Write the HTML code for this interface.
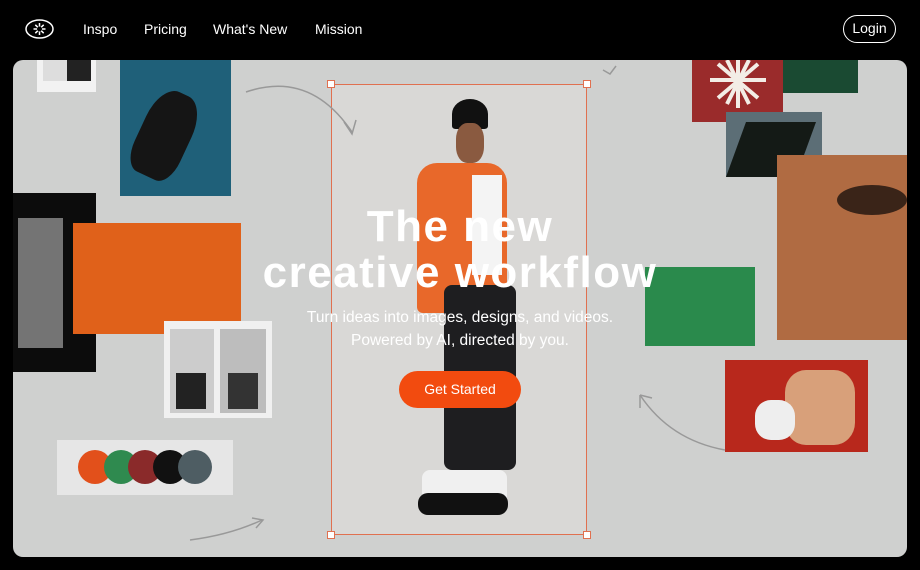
<!DOCTYPE html>
<html><head><style>
*{margin:0;padding:0;box-sizing:border-box}
body{width:920px;height:570px;background:#000;position:relative;overflow:hidden;font-family:"Liberation Sans",sans-serif}
.nav a{position:absolute;top:21px;color:#fff;font-size:14px;text-decoration:none}
.panel{position:absolute;left:13px;top:60px;width:894px;height:497px;background:#cfd0cf;border-radius:10px;overflow:hidden}
.b{position:absolute}
.c{position:absolute;border-radius:50%;width:34px;height:34px;top:450px}
</style></head><body>
<svg style="position:absolute;left:25px;top:19px" width="29" height="20" viewBox="0 0 29 20"><ellipse cx="14.5" cy="10" rx="13.5" ry="9" fill="none" stroke="#fff" stroke-width="1.5"/><g stroke="#fff" stroke-width="1.5"><line x1="14.5" y1="4" x2="14.5" y2="16"/><line x1="8.5" y1="10" x2="20.5" y2="10"/><line x1="10.3" y1="5.8" x2="18.7" y2="14.2"/><line x1="18.7" y1="5.8" x2="10.3" y2="14.2"/></g><circle cx="14.5" cy="10" r="2.5" fill="#000"/></svg>
<div class="nav"><a style="left:83px">Inspo</a><a style="left:144px">Pricing</a><a style="left:213px">What's New</a><a style="left:315px">Mission</a></div>
<div style="position:absolute;left:843px;top:15px;width:53px;height:28px;border:1.5px solid #fff;border-radius:14px;color:#fff;font-size:14px;text-align:center;line-height:25px">Login</div>
<div class="panel"></div>
<div class="b" style="left:37px;top:60px;width:59px;height:32px;background:#f2f2f2"><div style="position:absolute;left:6px;top:0;width:48px;height:21px;background:#ddd"></div><div style="position:absolute;left:30px;top:0;width:24px;height:21px;background:#222"></div></div>
<div class="b" style="left:120px;top:60px;width:111px;height:136px;background:#1f6079"><div style="position:absolute;left:20px;top:30px;width:50px;height:90px;background:#151515;border-radius:40% 40% 30% 30%;transform:rotate(25deg)"></div></div>
<div class="b" style="left:13px;top:193px;width:83px;height:179px;background:#0c0c0c"><div style="position:absolute;left:5px;top:25px;width:45px;height:130px;background:#bbb;opacity:.6"></div></div>
<div class="b" style="left:73px;top:223px;width:168px;height:111px;background:#e0611a"></div>
<div class="b" style="left:164px;top:321px;width:108px;height:97px;background:#f0f0f0"><div style="position:absolute;left:6px;top:8px;width:44px;height:84px;background:#ccc"></div><div style="position:absolute;left:56px;top:8px;width:46px;height:84px;background:#bdbdbd"></div><div style="position:absolute;left:12px;top:52px;width:30px;height:36px;background:#222"></div><div style="position:absolute;left:64px;top:52px;width:30px;height:36px;background:#333"></div></div>
<div class="b" style="left:57px;top:440px;width:176px;height:55px;background:#e6e6e6"></div>
<div class="c" style="left:78px;background:#e2501b"></div><div class="c" style="left:104px;background:#2f8a4f"></div><div class="c" style="left:128px;background:#8a2a2a"></div><div class="c" style="left:153px;background:#111"></div><div class="c" style="left:178px;background:#4e5d63"></div>
<div class="b" style="left:331px;top:84px;width:256px;height:451px;background:#d9d8d6;border:1px solid #e07050">
<div style="position:absolute;left:120px;top:14px;width:36px;height:30px;background:#111;border-radius:50% 50% 10% 10%"></div>
<div style="position:absolute;left:124px;top:38px;width:28px;height:40px;background:#8a5a40;border-radius:40%"></div>
<div style="position:absolute;left:85px;top:78px;width:90px;height:150px;background:#e8682a;border-radius:20px 20px 6px 6px"></div>
<div style="position:absolute;left:140px;top:90px;width:30px;height:100px;background:#f4f4f4"></div>
<div style="position:absolute;left:112px;top:200px;width:72px;height:185px;background:#1e1e20;border-radius:8px"></div>
<div style="position:absolute;left:90px;top:385px;width:85px;height:40px;background:#f0f0f0;border-radius:8px"></div>
<div style="position:absolute;left:86px;top:408px;width:90px;height:22px;background:#111;border-radius:10px"></div>
</div>
<div class="b" style="left:327px;top:80px;width:8px;height:8px;border:1px solid #e07050;background:#fff"></div>
<div class="b" style="left:583px;top:80px;width:8px;height:8px;border:1px solid #e07050;background:#fff"></div>
<div class="b" style="left:327px;top:531px;width:8px;height:8px;border:1px solid #e07050;background:#fff"></div>
<div class="b" style="left:583px;top:531px;width:8px;height:8px;border:1px solid #e07050;background:#fff"></div>
<div class="b" style="left:692px;top:60px;width:91px;height:62px;background:#9a2b2b"></div>
<svg class="b" style="left:708px;top:60px" width="60" height="50" viewBox="0 0 60 50"><g stroke="#f3ede6" stroke-width="4"><line x1="30" y1="0" x2="30" y2="48"/><line x1="2" y1="20" x2="58" y2="20"/><line x1="10" y1="4" x2="50" y2="38"/><line x1="50" y1="4" x2="10" y2="38"/><line x1="19" y1="0" x2="41" y2="44"/><line x1="41" y1="0" x2="19" y2="44"/></g></svg>
<div class="b" style="left:783px;top:60px;width:75px;height:33px;background:#1a4a32"></div>
<div class="b" style="left:726px;top:112px;width:96px;height:65px;background:#5c6e76"><div style="position:absolute;left:10px;top:10px;width:70px;height:55px;background:#141a16;transform:skew(-20deg)"></div></div>
<div class="b" style="left:777px;top:155px;width:130px;height:185px;background:#b06b42"><div style="position:absolute;left:60px;top:30px;width:70px;height:30px;background:#3a2418;border-radius:50%"></div></div>
<div class="b" style="left:645px;top:267px;width:110px;height:79px;background:#2a8a4c"></div>
<div class="b" style="left:725px;top:360px;width:143px;height:92px;background:#b8281c"><div style="position:absolute;left:60px;top:10px;width:70px;height:75px;background:#d8a07a;border-radius:30%"></div><div style="position:absolute;left:30px;top:40px;width:40px;height:40px;background:#eee;border-radius:40%"></div></div>
<svg class="b" style="left:0;top:0" width="920" height="570"><g fill="none" stroke="#999" stroke-width="1.5"><path d="M246 92 Q310 70 352 132"/><path d="M344 122 L352 134 L356 120"/><path d="M640 395 Q670 440 725 450"/><path d="M640 395 L640 408 M640 395 L652 398"/><path d="M190 540 Q230 535 262 520"/><path d="M252 518 L263 520 L256 528"/><path d="M603 70 L610 74 L616 66"/></g></svg>
<div class="b" style="left:0;top:204px;width:920px;text-align:center;color:#fff;font-size:44px;font-weight:bold;line-height:46px;letter-spacing:1.5px">The new<br>creative workflow</div>
<div class="b" style="left:0;top:306px;width:920px;text-align:center;color:#fff;font-size:15.5px;line-height:23px">Turn ideas into images, designs, and videos.<br>Powered by AI, directed by you.</div>
<div class="b" style="left:399px;top:371px;width:122px;height:37px;background:#f24b0f;border-radius:19px;color:#fff;font-size:14px;text-align:center;line-height:37px">Get Started</div>
</body></html>
